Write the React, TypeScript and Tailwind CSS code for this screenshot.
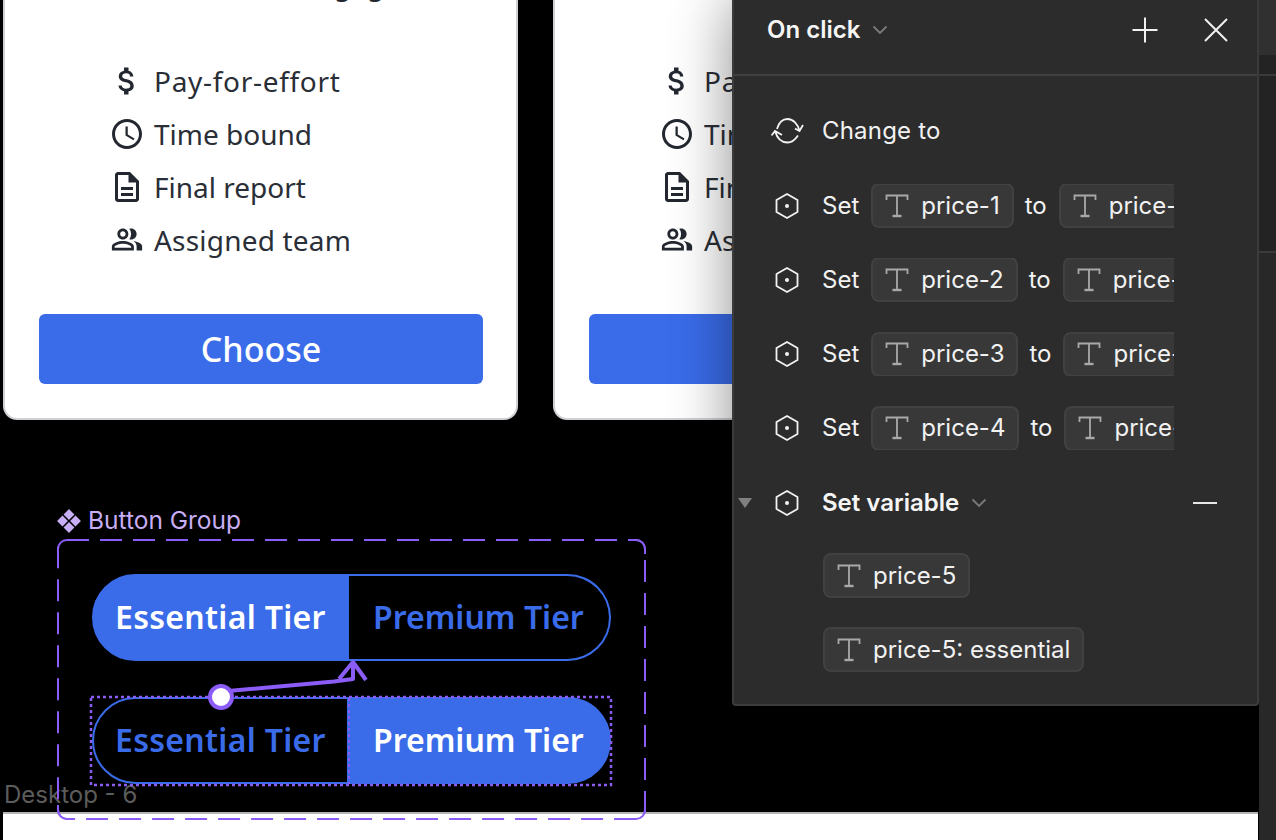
import { MdAttachMoney, MdOutlineSchedule, MdOutlineDescription, MdOutlinePeopleAlt } from "react-icons/md";

const cardFont = "font-['Noto_Sans','Open_Sans',sans-serif]";
const uiFont = "font-['Inter','Liberation_Sans',sans-serif]";

const features = [
  { label: "Pay-for-effort", Icon: MdAttachMoney, text: "tracking-[0.7px]", size: "h-[36px] w-[36px]" },
  { label: "Time bound", Icon: MdOutlineSchedule, text: "", size: "h-[36px] w-[36px]" },
  { label: "Final report", Icon: MdOutlineDescription, text: "", size: "h-[36px] w-[36px]" },
  { label: "Assigned team", Icon: MdOutlinePeopleAlt, text: "tracking-[0.2px]", size: "h-[33px] w-[36px]" },
];

function Card({ className }: { className: string }) {
  return (
    <div className={`absolute top-0 h-[420px] w-[515px] overflow-hidden rounded-b-[14px] border-x-2 border-b-2 border-[#cfcfd4] bg-white ${cardFont} ${className}`}>
      <p className="-mt-[34px] h-[88px] pl-[296px] text-[28px] leading-[36px] text-[#23272f]">engage</p>
      <ul className="flex flex-col pl-[104px]">
        {features.map(({ label, Icon, text, size }) => (
          <li key={label} className="flex h-[53px] items-center gap-[9px] text-[28px] text-[#2a2e36]">
            <Icon className={`${size} text-[#23272f]`} />
            <span className={text}>{label}</span>
          </li>
        ))}
      </ul>
      <button className="ml-[34px] mt-[48px] flex h-[70px] w-[444px] items-center justify-center rounded-[6px] bg-[#3a6cea] text-[34px] font-medium text-white">
        Choose
      </button>
    </div>
  );
}

function Segmented({ active }: { active: "left" | "right" }) {
  const on = "bg-[#3a6cea] text-white";
  const off = "text-[#3a6cea]";
  return (
    <div className={`flex h-[87px] w-[519px] text-[32px] font-semibold ${cardFont}`}>
      <div className={`flex w-[257px] items-center rounded-l-full border-2 border-[#3a6cea] pb-[2px] pl-[21px] tracking-[0.3px] ${active === "left" ? on : off}`}>
        Essential Tier
      </div>
      <div className={`flex flex-1 items-center rounded-r-full border-y-2 border-r-2 border-[#3a6cea] pb-[2px] pl-[24px] ${active === "right" ? on : off}`}>
        Premium Tier
      </div>
    </div>
  );
}

function Hexagon() {
  return (
    <svg width="30" height="30" viewBox="0 0 30 30" fill="none" className="shrink-0">
      <path d="M15 3 25.500 9v12L15 27 4.500 21V9Z" stroke="#f2f2f2" strokeWidth="1.8" strokeLinejoin="round" />
      <circle cx="15" cy="15" r="2" fill="#f2f2f2" />
    </svg>
  );
}

function TIcon() {
  return (
    <svg width="24" height="24" viewBox="0 0 24 24" fill="none" className="shrink-0">
      <path d="M1.500 6V1.500h21V6M12 1.500V22" stroke="#a9a9a9" strokeWidth="1.800" />
      <path d="M7.500 22h9" stroke="#a9a9a9" strokeWidth="2.400" />
    </svg>
  );
}

function Chip({ label }: { label: string }) {
  return (
    <span className="flex h-[45px] shrink-0 items-center gap-[12px] rounded-[8px] border-2 border-[#414141] bg-[#383838] pl-[12px] pr-[12px] text-[24px] text-[#f2f2f2]">
      <TIcon />
      {label}
    </span>
  );
}

function SetRow({ n }: { n: number }) {
  return (
    <div className="flex h-[44px] w-[402px] items-center overflow-hidden text-[24px] text-[#f2f2f2]">
      <Hexagon />
      <span className="ml-[20px] mr-[12px]">Set</span>
      <Chip label={`price-${n}`} />
      <span className="ml-[11px] mr-[12px]">to</span>
      <Chip label={`price-${n}: essential`} />
    </div>
  );
}

function Chevron() {
  return (
    <svg width="16" height="10" viewBox="0 0 16 10" fill="none">
      <path d="M1.500 1.500 8 8l6.500-6.500" stroke="#7a7a7a" strokeWidth="1.800" />
    </svg>
  );
}

function Panel() {
  return (
    <aside className={`absolute left-[732px] top-0 h-[706px] w-[527px] rounded-b-[4px] border-x-2 border-b-2 border-[#3b3b3b] bg-[#2c2c2c] shadow-[0_0_60px_rgba(0,0,0,0.45)] ${uiFont}`}>
      <header className="flex h-[76px] items-center border-b-2 border-[#404040] pb-[15px] pl-[33px] pr-[29px]">
        <span className="text-[24px] font-semibold text-[#f5f5f5]">On click</span>
        <span className="ml-[12px]"><Chevron /></span>
        <svg width="26" height="26" viewBox="0 0 26 26" className="ml-auto" fill="none">
          <path d="M13 0.500v25M0.500 13h25" stroke="#f2f2f2" strokeWidth="2" />
        </svg>
        <svg width="24" height="24" viewBox="0 0 24 24" className="ml-[46px]" fill="none">
          <path d="M1 1l22 22M23 1 1 23" stroke="#f2f2f2" strokeWidth="2" />
        </svg>
      </header>
      <div className="flex flex-col gap-[30.2px] pl-[38px] pt-[32.6px]">
        <div className="mb-[1px] flex h-[44px] items-center gap-[18px] text-[24px] tracking-[0.2px] text-[#f2f2f2]">
          <svg width="33" height="26" viewBox="0 0 33 26" fill="none" className="-ml-[1px] shrink-0">
            <path d="M6 11C8 4 12 1 16.500 1 22 1 27 6 28.500 13M32 7 28.500 13 24 10.500M27 17.500C24 22 20 24.500 16.500 24.500 10 24.500 6 20 4 13M0.500 17.500 4 13 11 17" stroke="#f2f2f2" strokeWidth="1.800" />
          </svg>
          Change to
        </div>
        {[1, 2, 3, 4].map((n) => (
          <SetRow key={n} n={n} />
        ))}
        <div className="relative flex h-[44px] items-center pr-[40px]">
          <span className="absolute -left-[34px] h-0 w-0 border-x-[7px] border-t-[10px] border-x-transparent border-t-[#808080]" />
          <Hexagon />
          <span className="ml-[20px] mr-[12px] text-[24px] font-semibold text-[#f5f5f5]">Set variable</span>
          <Chevron />
          <span className="ml-auto h-[2px] w-[24px] bg-[#e8e8e8]" />
        </div>
        <div className="-mt-[1.500px] flex pl-[51px]"><Chip label="price-5" /></div>
        <div className="-mt-[1px] flex pl-[51px]"><Chip label="price-5: essential" /></div>
      </div>
    </aside>
  );
}

function ButtonGroup() {
  return (
    <section className={`absolute left-[56px] top-[503px] ${uiFont}`}>
      <div className="flex h-[35px] items-center gap-[6px] text-[24.500px] text-[#c8aef5]">
        <svg width="26" height="26" viewBox="0 0 24 24" fill="#c8aef5" className="shrink-0">
          <path d="M12 1 17 6 12 11 7 6ZM6 7 11 12 6 17 1 12ZM18 7 23 12 18 17 13 12ZM12 13 17 18 12 23 7 18Z" />
        </svg>
        Button Group
      </div>
      <div className="relative flex h-[282px] w-[591px] flex-col gap-[36px] pl-[36px] pt-[36px]">
        <Segmented active="left" />
        <Segmented active="right" />
        <svg width="591" height="282" viewBox="0 0 591 282" fill="none" className="pointer-events-none absolute left-0 top-0">
          <rect x="2" y="2" width="587" height="279" rx="9" stroke="#8b5cf6" strokeWidth="2" strokeDasharray="22 11" />
          <path d="M2 16V11a9 9 0 0 1 9-9h5M575 2h5a9 9 0 0 1 9 9v5M589 267v5a9 9 0 0 1-9 9h-5M16 281h-5a9 9 0 0 1-9-9v-5" stroke="#8b5cf6" strokeWidth="2" />
          <rect x="35" y="159" width="520" height="88" stroke="#8b5cf6" strokeWidth="2.500" strokeDasharray="3 3" />
          <path d="M293 160v86" stroke="#8b5cf6" strokeWidth="2" strokeDasharray="3 3" />
          <path d="M172 153 278 143.500 297 141V124M283 141 297 124 310 142" stroke="#8b5cf6" strokeWidth="4" strokeLinejoin="round" />
          <circle cx="165" cy="159" r="11" fill="#ffffff" stroke="#8b5cf6" strokeWidth="4" />
        </svg>
      </div>
    </section>
  );
}

export default function App() {
  return (
    <div className="flex h-[840px] w-[1276px] overflow-hidden bg-black">
      <main className="relative h-full w-[1258px] shrink-0">
        <div className="absolute bottom-0 left-[3px] right-0 h-[28px] border-t-2 border-[#b5b5b5] bg-white" />
        <Card className="left-[3px]" />
        <Card className="left-[553px]" />
        <p className={`absolute left-[4px] top-[781px] text-[24px] leading-[28px] text-[#5c5c5c] ${uiFont}`}>Desktop - 6</p>
        <ButtonGroup />
        <Panel />
      </main>
      <aside className="relative z-10 ml-[1px] flex h-full flex-1 flex-col bg-[#2a2a2a]">
        <div className="h-[55px] bg-[#303030]" />
        <div className="h-[21px] border-b-2 border-[#3a3a3a] bg-[#232323]" />
        <div className="h-[177px] border-b-2 border-[#3a3a3a] bg-[#232323]" />
        <div className="flex-1 bg-[#282828]" />
      </aside>
    </div>
  );
}
